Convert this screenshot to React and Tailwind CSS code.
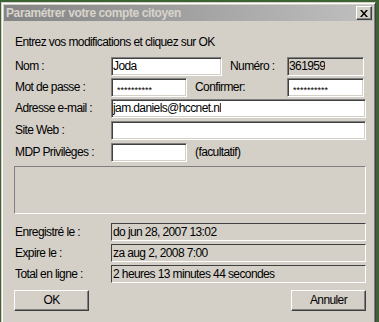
import React from "react";

const sunken =
  "border border-t-[#808080] border-l-[#808080] border-b-white border-r-white shadow-[inset_1px_1px_0_#404040,inset_-1px_-1px_0_#d4d0c8]";
const raised =
  "border border-t-white border-l-white border-b-[#404040] border-r-[#404040] shadow-[inset_-1px_-1px_0_#808080]";

const Field = ({ value, width = "flex-1", readOnly = false, mask = false }) => (
  <div
    className={`${width} h-full flex items-center pl-[1px] ${sunken} ${
      readOnly ? "bg-[#d4d0c8]" : "bg-white"
    }`}
  >
    {mask ? (
      <span className="pl-[4px] pt-[5px] text-[9px] leading-[9px] tracking-normal">
        {value}
      </span>
    ) : (
      <span className="truncate">{value}</span>
    )}
  </div>
);

const Info = ({ value }) => (
  <div className="flex-1 h-full flex items-center pl-[1px] bg-[#d4d0c8] border border-t-[#404040] border-l-[#404040] border-b-white border-r-white">
    <span className="truncate">{value}</span>
  </div>
);

const Label = ({ children, width = "w-[96px]", className = "" }) => (
  <div className={`${width} shrink-0 ${className}`}>{children}</div>
);

const Row = ({ children, className = "" }) => (
  <div className={`flex items-center h-[19px] ${className}`}>{children}</div>
);

export default function App() {
  return (
    <div className="w-[379px] h-[322px] overflow-hidden bg-[#3d6334] pt-[2px] pl-[1px] pr-[3px] text-black font-['Liberation_Sans',Arial,sans-serif]">
      <div className="h-[330px] bg-[#d4d0c8] p-[2px] border border-t-[#d4d0c8] border-l-[#d4d0c8] border-b-[#404040] border-r-[#404040] shadow-[inset_1px_1px_0_#fff,inset_-1px_-1px_0_#808080]">
        {/* title bar */}
        <div className="h-[16px] flex items-center justify-between bg-gradient-to-r from-[#848484] to-[#c0c0c0] pl-[2px] pr-[1px]">
          <span className="font-bold text-[12px] leading-[16px] text-[#d8d4cc] tracking-[-0.4px]">
            Paramétrer votre compte citoyen
          </span>
          <div className={`w-[16px] h-[14px] bg-[#d4d0c8] flex items-center justify-center ${raised}`}>
            <svg width="8" height="7" viewBox="0 0 8 7">
              <path d="M0 0h2l2 2.5L6 0h2L5 3.5 8 7H6L4 4.5 2 7H0l3-3.5z" fill="#000" />
            </svg>
          </div>
        </div>

        {/* body */}
        <div className="pl-[11px] pr-[7px] text-[12px] leading-[15px] tracking-[-0.6px]">
          <div className="h-[36px] pt-[14px]">Entrez vos modifications et cliquez sur OK</div>

          <Row>
            <Label>Nom :</Label>
            <Field value="Joda" width="w-[111px]" />
            <Label width="w-[57px]" className="ml-[8px]">Numéro :</Label>
            <Field value="361959" width="w-[77px]" readOnly />
          </Row>
          <Row className="mt-[2px]">
            <Label>Mot de passe :</Label>
            <Field value="**********" width="w-[76px]" mask />
            <Label width="w-[92px]" className="ml-[8px]">Confirmer:</Label>
            <Field value="**********" width="w-[77px]" mask />
          </Row>
          <Row className="mt-[2px]">
            <Label>Adresse e-mail :</Label>
            <Field value="jam.daniels@hccnet.nl" />
          </Row>
          <Row className="mt-[3px]">
            <Label>Site Web :</Label>
            <Field value="" />
          </Row>
          <Row className="mt-[3px]">
            <Label>MDP Privilèges :</Label>
            <Field value="" width="w-[76px]" />
            <span className="ml-[8px]">(facultatif)</span>
          </Row>

          <div className="mt-[4px] -ml-px h-[48px] border border-t-[#808080] border-l-[#808080] border-b-white border-r-white" />

          <Row className="mt-[9px] !h-[18px]">
            <Label>Enregistré le :</Label>
            <Info value="do jun 28, 2007 13:02" />
          </Row>
          <Row className="mt-[3px] !h-[18px]">
            <Label>Expire le :</Label>
            <Info value="za aug 2, 2008 7:00" />
          </Row>
          <Row className="mt-[3px] !h-[18px]">
            <Label>Total en ligne :</Label>
            <Info value="2 heures 13 minutes 44 secondes" />
          </Row>

          <div className="mt-[7px] -ml-px flex justify-between">
            <button className={`w-[75px] h-[21px] bg-[#d4d0c8] ${raised}`}>OK</button>
            <button className={`w-[75px] h-[21px] bg-[#d4d0c8] ${raised}`}>Annuler</button>
          </div>
        </div>
      </div>
    </div>
  );
}
